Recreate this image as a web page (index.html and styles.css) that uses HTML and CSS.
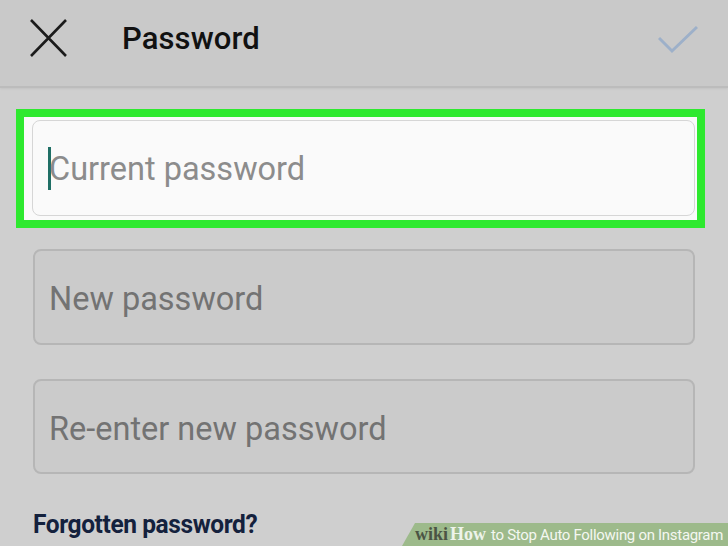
FILE: index.html
```html
<!DOCTYPE html>
<html lang="en">
<head>
  <meta charset="UTF-8">
  <meta name="viewport" content="width=device-width, initial-scale=1.0">
  <title>Password</title>
  <link rel="stylesheet" href="styles.css">
</head>
<body>

  <!-- Top bar -->
  <div class="topbar">
    <svg class="icon-close" width="38" height="38" viewBox="0 0 38 38">
      <path d="M2 1 L37 37 M37 1 L2 37" stroke="#1b1b1b" stroke-width="2.6" fill="none"/>
    </svg>
    <div class="title">Password</div>
    <svg class="icon-check" width="40" height="30" viewBox="0 0 40 30">
      <path d="M1 13 L14 26 L39 2" stroke="#9db0c9" stroke-width="3" fill="none"/>
    </svg>
  </div>

  <!-- Form -->
  <div class="form">
    <div class="highlight">
      <div class="field field-active">
        <span class="caret"></span>
        <span class="placeholder">Current password</span>
      </div>
    </div>

    <div class="field field-plain field-new">
      <span class="placeholder">New password</span>
    </div>

    <div class="field field-plain field-again">
      <span class="placeholder">Re-enter new password</span>
    </div>

    <div class="forgot">Forgotten password?</div>
  </div>

  <!-- Watermark -->
  <div class="watermark">
    <span class="wm-wiki">wiki</span><span class="wm-how">How</span><span class="wm-text">to Stop Auto Following on Instagram</span>
  </div>

</body>
</html>
```

FILE: styles.css
```css
html, body {
  margin: 0;
  padding: 0;
}
body {
  width: 728px;
  height: 546px;
  overflow: hidden;
  position: relative;
  background-color: #cfcfcf;
  font-family: Roboto, "Liberation Sans", Arial, sans-serif;
}

/* Top bar */
.topbar {
  height: 86px;
  display: flex;
  align-items: center;
  padding: 0 30px 0 29px;
  background-color: #c9c9c9;
  border-bottom: 2px solid #bcbcbc;
  box-shadow: 0 1px 2px rgba(0, 0, 0, 0.06);
}
.icon-close {
  margin-top: -10px;
}
.title {
  margin-left: 55px;
  margin-top: -9px;
  font-size: 31px;
  font-weight: 500;
  color: #111;
  letter-spacing: 0.1px;
}
.icon-check {
  margin-left: auto;
  margin-top: -7px;
}

/* Form */
.form {
  padding-top: 21px;
}
.highlight {
  width: 663px;
  margin-left: 16px;
  border: 8px solid #2ee92f;
  padding: 3px 2px 4px 8px;
  background-color: #fafafa;
}
.field {
  box-sizing: border-box;
  height: 96px;
  display: flex;
  align-items: center;
  border-radius: 8px;
  padding-left: 14px;
}
.field-active {
  background-color: #fafafa;
  border: 1px solid #d6d6d6;
  padding-left: 15px;
}
.caret {
  display: inline-block;
  width: 3px;
  height: 43px;
  background-color: #1f6f65;
  margin-right: -2px;
}
.placeholder {
  font-size: 32.5px;
  color: #737373;
  padding-top: 4px;
}
.field-active .placeholder {
  color: #8c8c8c;
  padding-top: 2px;
}
.field-plain {
  width: 662px;
  margin-left: 33px;
  background-color: #cbcbcb;
  border: 2px solid #b6b6b6;
}
.field-new {
  margin-top: 21px;
}
.field-again {
  margin-top: 34px;
  height: 95px;
}

.forgot {
  margin: 36px 0 0 33px;
  font-size: 24.5px;
  font-weight: 700;
  color: #14213d;
  letter-spacing: -0.4px;
  transform: scaleY(1.08);
  transform-origin: left bottom;
}

/* Watermark */
.watermark {
  position: absolute;
  right: 0;
  bottom: 0;
  width: 326px;
  height: 23px;
  padding-left: 13px;
  box-sizing: border-box;
  background-color: #9dba8b;
  clip-path: polygon(13px 0, 100% 0, 100% 100%, 0 100%);
  display: flex;
  align-items: center;
  white-space: nowrap;
}
.wm-wiki {
  font-family: "Liberation Serif", serif;
  font-weight: 700;
  font-size: 18px;
  color: #4b5444;
}
.wm-how {
  font-family: "Liberation Serif", serif;
  font-weight: 700;
  font-size: 18px;
  color: #eef3ea;
  margin-left: 2px;
}
.wm-text {
  margin-left: 5px;
  font-size: 15px;
  color: #f4f7f1;
  letter-spacing: -0.3px;
}
```
